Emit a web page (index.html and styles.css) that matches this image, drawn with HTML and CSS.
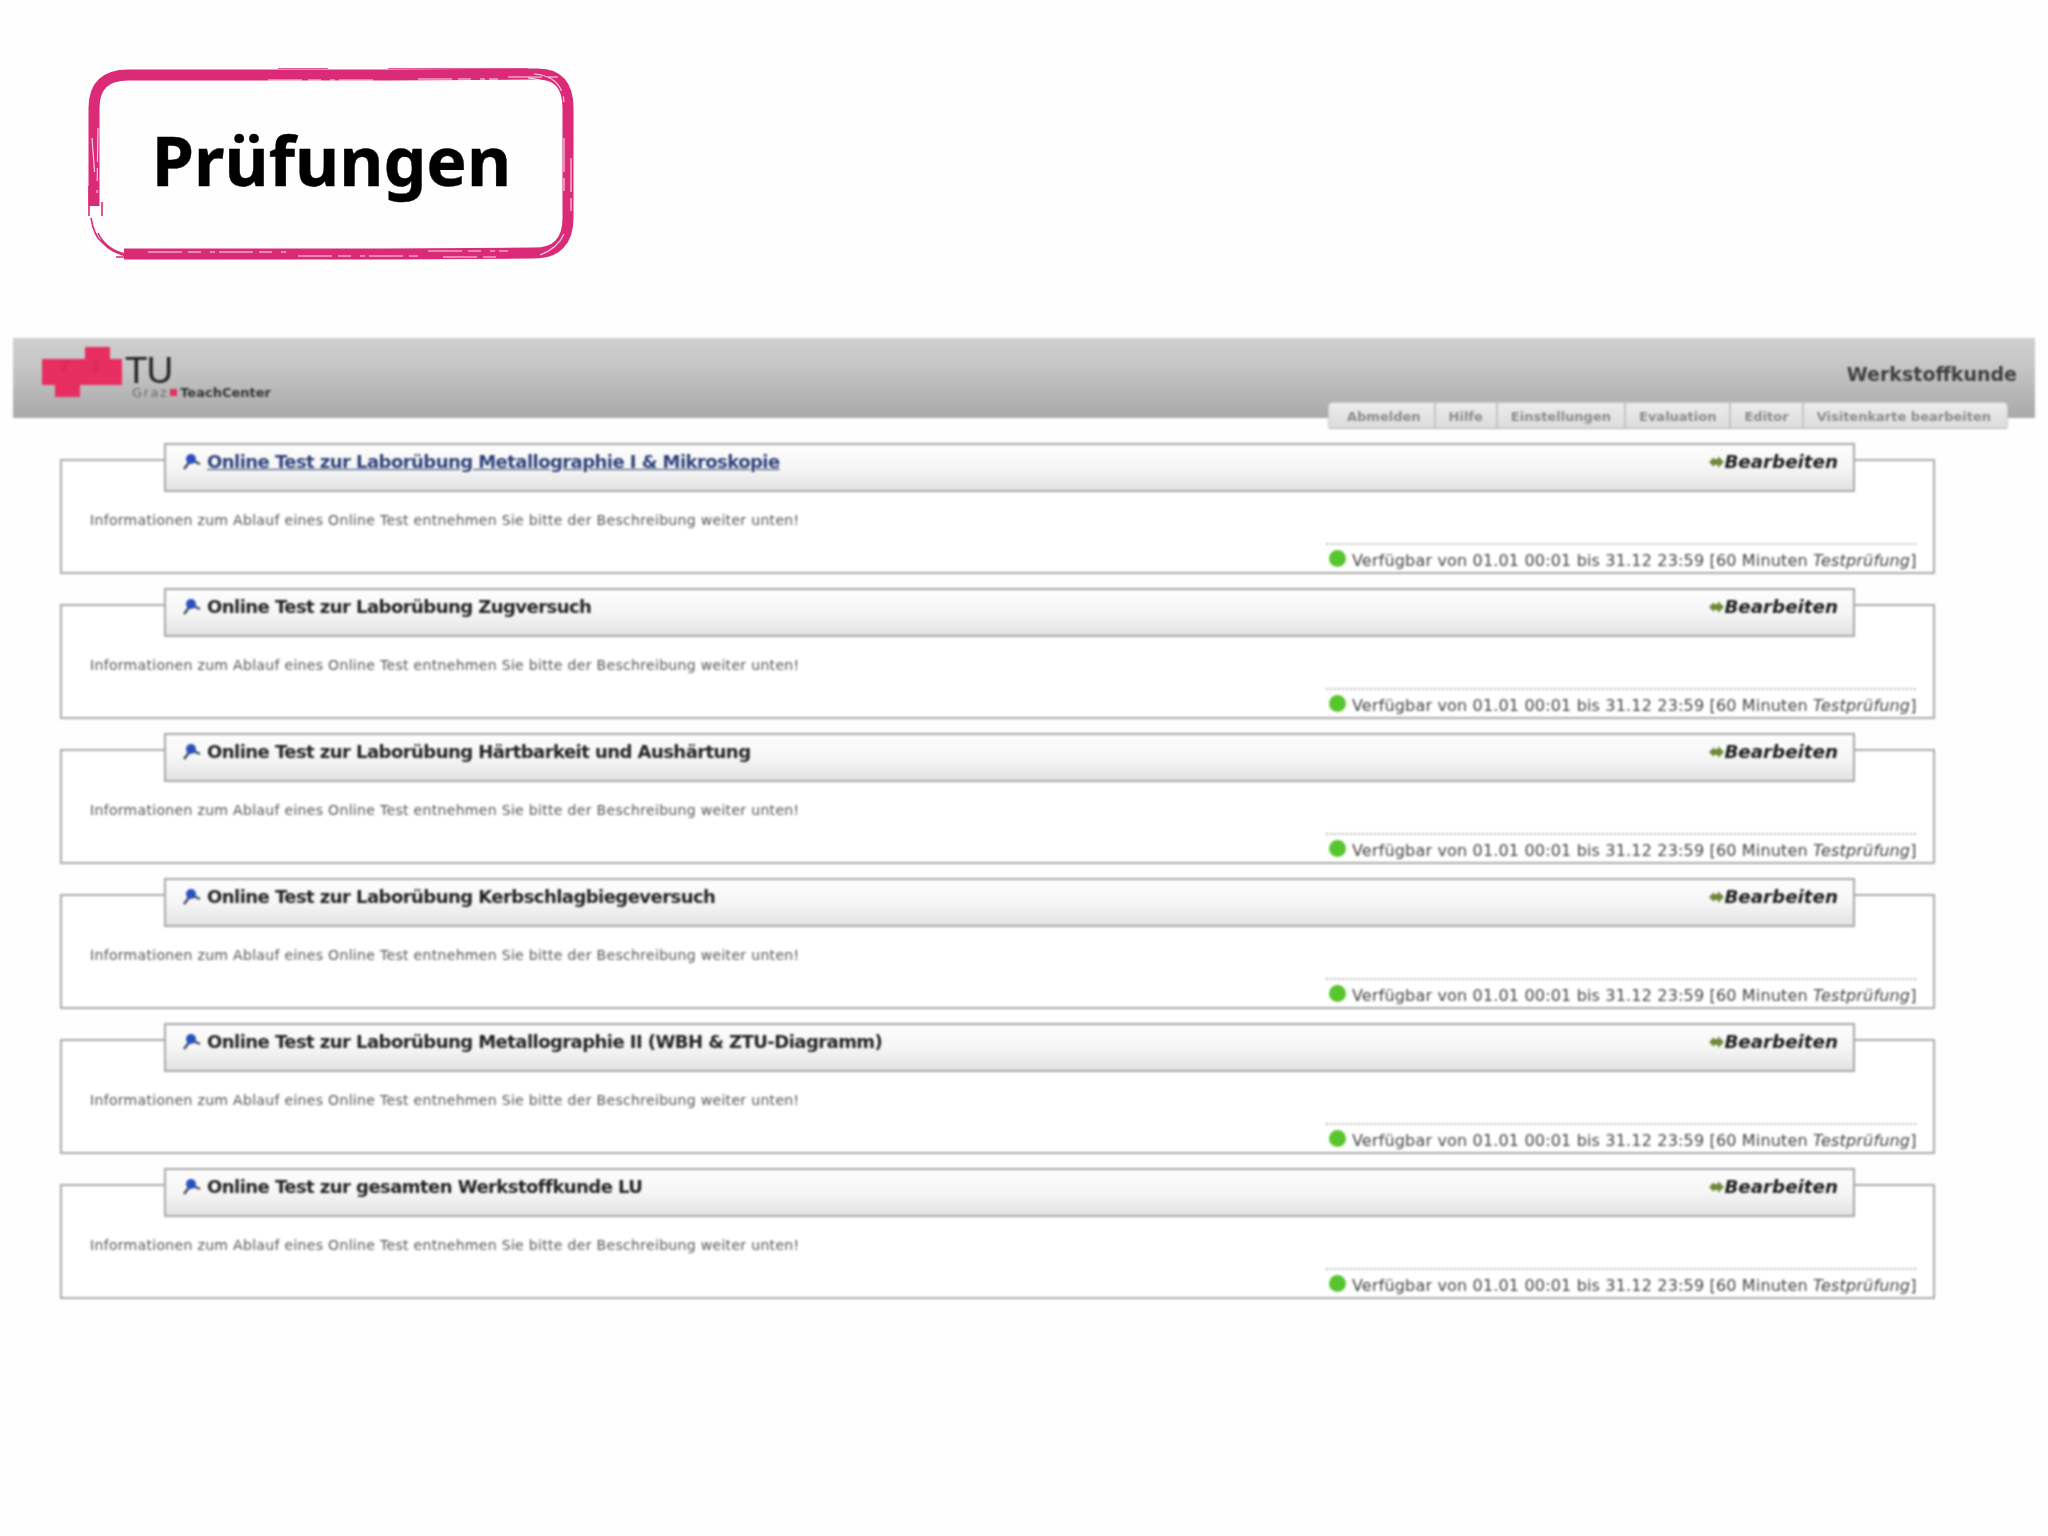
FILE: index.html
```html
<!DOCTYPE html>
<html lang="de">
<head>
<meta charset="utf-8">
<title>Prüfungen</title>
<link rel="stylesheet" href="styles.css">
</head>
<body>
<main class="slide">
  <section class="label">
    <svg class="label-frame" viewBox="0 0 487 192" aria-hidden="true">
      <path class="brush" d="M6 138 V40 Q6 7 40 7 H300 L450 6 Q480 6 480 40 V150 Q480 185 446 185 L300 186 H36"/>
      <path class="brush-thin" d="M3 150 Q6 168 14 174 Q24 186 44 189 M1 118 V148 M28 189 H150 M10 165 Q18 182 38 186 M190 0 H240 M300 0 H440 M14 148 V134"/>
      <path class="scratch" d="M4 70 L7 110 M10 60 L9 125 M180 12 H290 M330 11 H410 M420 9 H470 M446 6 Q474 8 476 34 M440 10 Q470 12 472 40 M60 184 H200 M210 188 H330 M340 183 H420 M355 189 H410 M476 70 V130 M483 90 V150 M452 187 Q470 180 476 166"/>
    </svg>
    <h1 class="label-text">Prüfungen</h1>
  </section>

  <section class="screen">
    <header class="topbar">
      <div class="logo">
        <svg class="logo-mark" viewBox="0 0 80 50" aria-hidden="true">
          <path class="logo-fill" d="M0 12 H43 V0 H68 V12 H80 V38 H38 V50 H13 V38 H0 Z"/>
          <path class="logo-cut" d="M25 14 L21 24 M54 13 L54 25"/>
        </svg>
        <div class="logo-words">
          <div class="logo-tu">TU</div>
          <div class="logo-sub"><span class="logo-graz">Graz</span><span class="logo-dot"></span>TeachCenter</div>
        </div>
      </div>
      <div class="topbar-right">
        <div class="course">Werkstoffkunde</div>
        <nav class="tabs">
          <a class="tab">Abmelden</a>
          <a class="tab">Hilfe</a>
          <a class="tab">Einstellungen</a>
          <a class="tab">Evaluation</a>
          <a class="tab">Editor</a>
          <a class="tab">Visitenkarte bearbeiten</a>
        </nav>
      </div>
    </header>

    <div class="cards">
      <article class="card">
        <div class="card-bar">
          <svg class="pin" viewBox="0 0 20 18" aria-hidden="true"><path class="pin-arm" d="M2 16 L9 7 L18 11"/><circle class="pin-head" cx="9" cy="6" r="5"/></svg>
          <a class="card-title card-title-link">Online Test zur Laborübung Metallographie I &amp; Mikroskopie</a>
          <a class="edit"><svg class="edit-arrow" viewBox="0 0 15 14" aria-hidden="true"><path d="M0 7 L5 2 V4 H9 V1 L15 7 L9 13 V10 H5 V12 Z"/></svg>Bearbeiten</a>
        </div>
        <p class="info">Informationen zum Ablauf eines Online Test entnehmen Sie bitte der Beschreibung weiter unten!</p>
        <div class="status"><span class="dot"></span>Verfügbar von 01.01 00:01 bis 31.12 23:59 [60 Minuten <em>Testprüfung</em>]</div>
      </article>
      <article class="card">
        <div class="card-bar">
          <svg class="pin" viewBox="0 0 20 18" aria-hidden="true"><path class="pin-arm" d="M2 16 L9 7 L18 11"/><circle class="pin-head" cx="9" cy="6" r="5"/></svg>
          <a class="card-title">Online Test zur Laborübung Zugversuch</a>
          <a class="edit"><svg class="edit-arrow" viewBox="0 0 15 14" aria-hidden="true"><path d="M0 7 L5 2 V4 H9 V1 L15 7 L9 13 V10 H5 V12 Z"/></svg>Bearbeiten</a>
        </div>
        <p class="info">Informationen zum Ablauf eines Online Test entnehmen Sie bitte der Beschreibung weiter unten!</p>
        <div class="status"><span class="dot"></span>Verfügbar von 01.01 00:01 bis 31.12 23:59 [60 Minuten <em>Testprüfung</em>]</div>
      </article>
      <article class="card">
        <div class="card-bar">
          <svg class="pin" viewBox="0 0 20 18" aria-hidden="true"><path class="pin-arm" d="M2 16 L9 7 L18 11"/><circle class="pin-head" cx="9" cy="6" r="5"/></svg>
          <a class="card-title">Online Test zur Laborübung Härtbarkeit und Aushärtung</a>
          <a class="edit"><svg class="edit-arrow" viewBox="0 0 15 14" aria-hidden="true"><path d="M0 7 L5 2 V4 H9 V1 L15 7 L9 13 V10 H5 V12 Z"/></svg>Bearbeiten</a>
        </div>
        <p class="info">Informationen zum Ablauf eines Online Test entnehmen Sie bitte der Beschreibung weiter unten!</p>
        <div class="status"><span class="dot"></span>Verfügbar von 01.01 00:01 bis 31.12 23:59 [60 Minuten <em>Testprüfung</em>]</div>
      </article>
      <article class="card">
        <div class="card-bar">
          <svg class="pin" viewBox="0 0 20 18" aria-hidden="true"><path class="pin-arm" d="M2 16 L9 7 L18 11"/><circle class="pin-head" cx="9" cy="6" r="5"/></svg>
          <a class="card-title">Online Test zur Laborübung Kerbschlagbiegeversuch</a>
          <a class="edit"><svg class="edit-arrow" viewBox="0 0 15 14" aria-hidden="true"><path d="M0 7 L5 2 V4 H9 V1 L15 7 L9 13 V10 H5 V12 Z"/></svg>Bearbeiten</a>
        </div>
        <p class="info">Informationen zum Ablauf eines Online Test entnehmen Sie bitte der Beschreibung weiter unten!</p>
        <div class="status"><span class="dot"></span>Verfügbar von 01.01 00:01 bis 31.12 23:59 [60 Minuten <em>Testprüfung</em>]</div>
      </article>
      <article class="card">
        <div class="card-bar">
          <svg class="pin" viewBox="0 0 20 18" aria-hidden="true"><path class="pin-arm" d="M2 16 L9 7 L18 11"/><circle class="pin-head" cx="9" cy="6" r="5"/></svg>
          <a class="card-title">Online Test zur Laborübung Metallographie II (WBH &amp; ZTU-Diagramm)</a>
          <a class="edit"><svg class="edit-arrow" viewBox="0 0 15 14" aria-hidden="true"><path d="M0 7 L5 2 V4 H9 V1 L15 7 L9 13 V10 H5 V12 Z"/></svg>Bearbeiten</a>
        </div>
        <p class="info">Informationen zum Ablauf eines Online Test entnehmen Sie bitte der Beschreibung weiter unten!</p>
        <div class="status"><span class="dot"></span>Verfügbar von 01.01 00:01 bis 31.12 23:59 [60 Minuten <em>Testprüfung</em>]</div>
      </article>
      <article class="card">
        <div class="card-bar">
          <svg class="pin" viewBox="0 0 20 18" aria-hidden="true"><path class="pin-arm" d="M2 16 L9 7 L18 11"/><circle class="pin-head" cx="9" cy="6" r="5"/></svg>
          <a class="card-title">Online Test zur gesamten Werkstoffkunde LU</a>
          <a class="edit"><svg class="edit-arrow" viewBox="0 0 15 14" aria-hidden="true"><path d="M0 7 L5 2 V4 H9 V1 L15 7 L9 13 V10 H5 V12 Z"/></svg>Bearbeiten</a>
        </div>
        <p class="info">Informationen zum Ablauf eines Online Test entnehmen Sie bitte der Beschreibung weiter unten!</p>
        <div class="status"><span class="dot"></span>Verfügbar von 01.01 00:01 bis 31.12 23:59 [60 Minuten <em>Testprüfung</em>]</div>
      </article>
    </div>
  </section>
</main>
</body>
</html>
```

FILE: styles.css
```css
* { box-sizing: border-box; }

html, body {
  margin: 0;
  background: #fefefe;
}

.slide {
  width: 2048px;
  height: 1536px;
  padding-top: 68px;
  overflow: hidden;
}

/* Title label with a brushed frame */
.label {
  position: relative;
  width: 487px;
  height: 192px;
  margin-left: 88px;
  display: flex;
  align-items: center;
  justify-content: center;
}

.label-frame {
  position: absolute;
  inset: 0;
  width: 100%;
  height: 100%;
  filter: blur(0.4px);
}

.brush {
  fill: none;
  stroke: #da2a78;
  stroke-width: 11;
}

.brush-thin {
  fill: none;
  stroke: #da2a78;
  stroke-width: 1.6;
}

.scratch {
  fill: none;
  stroke: #fff;
  stroke-width: 1.1;
  stroke-dasharray: 34 6 13 9 5 4;
  opacity: 0.85;
}

.label-text {
  margin: 0;
  font-family: "Noto Sans", sans-serif;
  font-weight: 700;
  font-size: 68px;
  line-height: 1;
  color: #000;
  position: relative;
  top: -4px;
  -webkit-text-stroke: 0.4px #000;
}

/* Embedded screenshot */
.screen {
  margin: 78px 13px 0;
  width: 2022px;
  filter: blur(0.85px);
  font-family: "DejaVu Sans", sans-serif;
}

.topbar {
  height: 80px;
  display: flex;
  justify-content: space-between;
  background: linear-gradient(#cfcfcf 0%, #c6c6c6 35%, #a9a9a9 100%);
}

.logo {
  display: flex;
  margin-left: 29px;
  padding-top: 9px;
}

.logo-mark {
  width: 80px;
  height: 50px;
  flex: none;
}

.logo-fill { fill: #e62e60; }

.logo-cut {
  fill: none;
  stroke: #c8294f;
  stroke-width: 1.4;
}

.logo-words {
  margin-left: 3px;
  padding-top: 9px;
}

.logo-tu {
  font-family: "Liberation Sans", sans-serif;
  font-size: 37px;
  line-height: 30px;
  color: #222;
  letter-spacing: -1px;
}

.logo-sub {
  margin-left: 7px;
  font-size: 13px;
  line-height: 13px;
  font-weight: 700;
  color: #333;
  display: flex;
  align-items: center;
  white-space: nowrap;
}

.logo-graz {
  color: #6a6a6a;
  font-weight: 400;
  letter-spacing: 1.5px;
}

.logo-dot {
  width: 7px;
  height: 7px;
  margin: 0 3px 0 2px;
  background: #e62e60;
}

.topbar-right {
  display: flex;
  flex-direction: column;
  align-items: flex-end;
  padding: 24px 18px 0 0;
}

.course {
  font-size: 19px;
  line-height: 24px;
  font-weight: 700;
  color: #3e3e3e;
}

.tabs {
  flex: none;
  display: flex;
  height: 27px;
  margin-top: 16px;
  margin-right: 9px;
  background: linear-gradient(#ececec, #dcdcdc);
  border: 1px solid #c8c8c8;
  border-bottom-color: #b4b4b4;
  border-radius: 5px 5px 2px 2px;
}

.tab {
  display: flex;
  align-items: center;
  padding: 1px 13px 0;
  border-left: 2px solid #c4c4c4;
  font-size: 13px;
  font-weight: 700;
  color: #8a8a8a;
  white-space: nowrap;
}

.tab:first-child {
  border-left: 0;
  padding-left: 18px;
}

.tab:last-child { padding-right: 16px; }

/* Test cards */
.cards {
  display: flex;
  flex-direction: column;
  gap: 30px;
  margin: 41px 0 0 47px;
  width: 1875px;
}

.card {
  height: 115px;
  border: 2px solid #aaa;
  background: #fff;
  display: flex;
  flex-direction: column;
}

.card-bar {
  height: 49px;
  margin: -18px 78px 0 102px;
  padding: 0 15px 12px 16px;
  display: flex;
  align-items: center;
  border: 2px solid #a8a8a8;
  background: linear-gradient(#fdfdfd 0%, #f6f6f6 50%, #e3e3e3 100%);
}

.pin {
  width: 20px;
  height: 18px;
  flex: none;
  margin-right: 5px;
}

.pin-arm {
  fill: none;
  stroke: #3a4658;
  stroke-width: 2.4;
}

.pin-head { fill: #2b4fc0; }

.card-title {
  font-size: 18px;
  font-weight: 700;
  color: #222;
  white-space: nowrap;
  letter-spacing: -0.55px;
}

.card-title-link {
  color: #2c3f78;
  text-decoration: underline;
}

.edit {
  display: flex;
  align-items: center;
  margin-left: auto;
  font-size: 18.3px;
  font-style: italic;
  font-weight: 700;
  color: #1c1c1c;
}

.edit-arrow {
  width: 15px;
  height: 14px;
  margin-right: 0;
  fill: #6f8a3a;
}

.info {
  margin: 19px 0 0 28px;
  font-size: 14px;
  letter-spacing: 0.32px;
  line-height: 18px;
  color: #555;
  white-space: nowrap;
}

.status {
  display: flex;
  align-items: center;
  align-self: flex-end;
  width: 590px;
  height: 29px;
  margin-top: auto;
  margin-right: 17px;
  padding-top: 4px;
  border-top: 2px dotted #b9b9b9;
  font-size: 16px;
  letter-spacing: 0.17px;
  color: #444;
  white-space: pre;
}

.status em { font-style: italic; }

.dot {
  width: 17px;
  height: 17px;
  margin: 0 6px 5px 3px;
  border-radius: 50%;
  background: #58c52e;
  flex: none;
}
```
